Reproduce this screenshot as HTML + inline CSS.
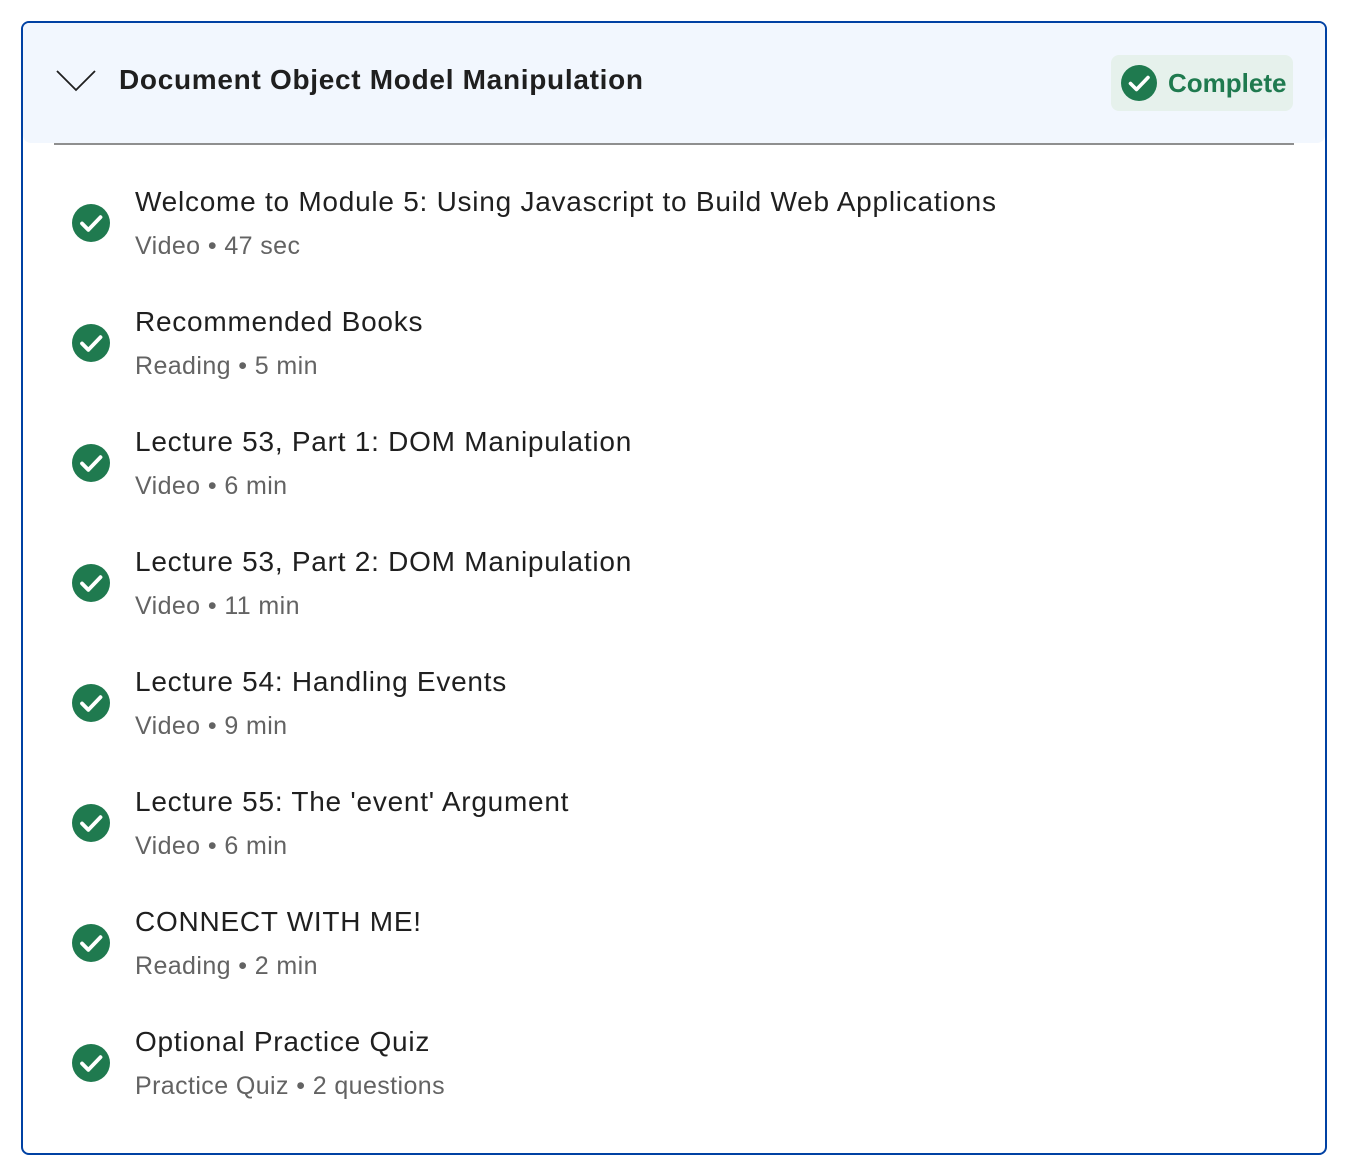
<!DOCTYPE html>
<html><head><meta charset="utf-8"><style>
html,body{margin:0;padding:0;background:#fff;width:1348px;height:1174px;overflow:hidden;font-family:"Liberation Sans",sans-serif;}
.box{position:absolute;left:21px;top:21px;width:1302px;height:1130px;border:2px solid #0041a3;border-radius:8px;}
.head{position:absolute;left:0;top:0;width:1302px;height:120px;background:#f2f7fe;border-radius:6px 6px 8px 8px;}
.div{position:absolute;left:31px;top:120px;width:1240px;height:2px;background:#8f8f8f;}
.chev{position:absolute;left:33px;top:46px;}
.ht{position:absolute;left:96px;top:41px;font-weight:bold;font-size:28px;color:#1f1f1f;letter-spacing:0.7px;}
.badge{position:absolute;left:1088px;top:32px;width:182px;height:56px;background:#e6f1ec;border-radius:8px;}
.badge svg{position:absolute;left:10px;top:10px;}
.badge span{position:absolute;left:57px;top:13px;font-weight:bold;font-size:26px;color:#1f7a4f;}
.item{position:absolute;left:0;width:1200px;height:120px;}
.item svg{position:absolute;left:49px;}
.t{position:absolute;left:112px;top:0;font-size:28px;color:#1f1f1f;white-space:nowrap;letter-spacing:0.75px;}
.s{position:absolute;left:112px;top:46px;font-size:25px;color:#636363;white-space:nowrap;letter-spacing:0.4px;}
</style></head><body>
<div class="box">
<div class="head"></div>
<div class="div"></div>
<svg class="chev" width="40" height="24" viewBox="0 0 40 24"><path d="M1 2 L20 21 L39 2" fill="none" stroke="#1f1f1f" stroke-width="1.8"/></svg>
<div class="ht">Document Object Model Manipulation</div>
<div class="badge"><svg width="36" height="36" viewBox="0 0 36 36"><circle cx="18" cy="18" r="18" fill="#1f7a4f"/><path d="M9.5 18.5 L15.5 24.5 L27 12.5" fill="none" stroke="#fff" stroke-width="3.6" stroke-linecap="round" stroke-linejoin="round"/></svg><span>Complete</span></div>

<div class="item" style="top:163px"><svg style="top:18px" width="38" height="38" viewBox="0 0 36 36"><circle cx="18" cy="18" r="18" fill="#1f7a4f"/><path d="M9.5 18.5 L15.5 24.5 L27 12.5" fill="none" stroke="#fff" stroke-width="3.6" stroke-linecap="round" stroke-linejoin="round"/></svg><div class="t">Welcome to Module 5: Using Javascript to Build Web Applications</div><div class="s">Video • 47 sec</div></div>
<div class="item" style="top:283px"><svg style="top:18px" width="38" height="38" viewBox="0 0 36 36"><circle cx="18" cy="18" r="18" fill="#1f7a4f"/><path d="M9.5 18.5 L15.5 24.5 L27 12.5" fill="none" stroke="#fff" stroke-width="3.6" stroke-linecap="round" stroke-linejoin="round"/></svg><div class="t">Recommended Books</div><div class="s">Reading • 5 min</div></div>
<div class="item" style="top:403px"><svg style="top:18px" width="38" height="38" viewBox="0 0 36 36"><circle cx="18" cy="18" r="18" fill="#1f7a4f"/><path d="M9.5 18.5 L15.5 24.5 L27 12.5" fill="none" stroke="#fff" stroke-width="3.6" stroke-linecap="round" stroke-linejoin="round"/></svg><div class="t">Lecture 53, Part 1: DOM Manipulation</div><div class="s">Video • 6 min</div></div>
<div class="item" style="top:523px"><svg style="top:18px" width="38" height="38" viewBox="0 0 36 36"><circle cx="18" cy="18" r="18" fill="#1f7a4f"/><path d="M9.5 18.5 L15.5 24.5 L27 12.5" fill="none" stroke="#fff" stroke-width="3.6" stroke-linecap="round" stroke-linejoin="round"/></svg><div class="t">Lecture 53, Part 2: DOM Manipulation</div><div class="s">Video • 11 min</div></div>
<div class="item" style="top:643px"><svg style="top:18px" width="38" height="38" viewBox="0 0 36 36"><circle cx="18" cy="18" r="18" fill="#1f7a4f"/><path d="M9.5 18.5 L15.5 24.5 L27 12.5" fill="none" stroke="#fff" stroke-width="3.6" stroke-linecap="round" stroke-linejoin="round"/></svg><div class="t">Lecture 54: Handling Events</div><div class="s">Video • 9 min</div></div>
<div class="item" style="top:763px"><svg style="top:18px" width="38" height="38" viewBox="0 0 36 36"><circle cx="18" cy="18" r="18" fill="#1f7a4f"/><path d="M9.5 18.5 L15.5 24.5 L27 12.5" fill="none" stroke="#fff" stroke-width="3.6" stroke-linecap="round" stroke-linejoin="round"/></svg><div class="t">Lecture 55: The 'event' Argument</div><div class="s">Video • 6 min</div></div>
<div class="item" style="top:883px"><svg style="top:18px" width="38" height="38" viewBox="0 0 36 36"><circle cx="18" cy="18" r="18" fill="#1f7a4f"/><path d="M9.5 18.5 L15.5 24.5 L27 12.5" fill="none" stroke="#fff" stroke-width="3.6" stroke-linecap="round" stroke-linejoin="round"/></svg><div class="t">CONNECT WITH ME!</div><div class="s">Reading • 2 min</div></div>
<div class="item" style="top:1003px"><svg style="top:18px" width="38" height="38" viewBox="0 0 36 36"><circle cx="18" cy="18" r="18" fill="#1f7a4f"/><path d="M9.5 18.5 L15.5 24.5 L27 12.5" fill="none" stroke="#fff" stroke-width="3.6" stroke-linecap="round" stroke-linejoin="round"/></svg><div class="t">Optional Practice Quiz</div><div class="s">Practice Quiz • 2 questions</div></div>
</div>
</body></html>
